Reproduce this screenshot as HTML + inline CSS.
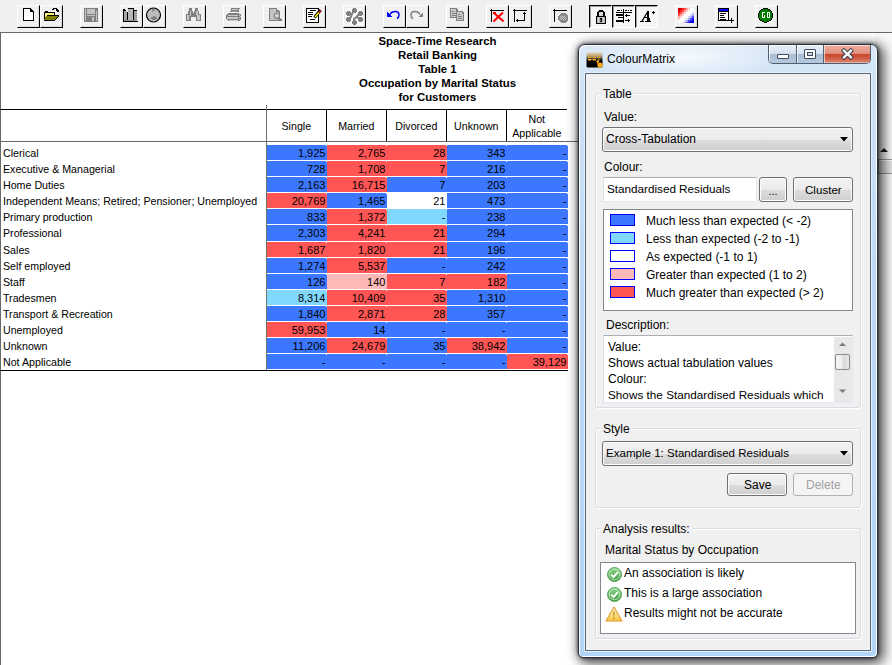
<!DOCTYPE html>
<html><head><meta charset="utf-8">
<style>
*{box-sizing:border-box;margin:0;padding:0}
html,body{width:892px;height:665px;overflow:hidden;background:#f0f0f0;font-family:"Liberation Sans",sans-serif;position:relative}
.a{position:absolute}
.tb{position:absolute;top:5px;width:23px;height:23px;border-top:1px solid #fff;border-left:1px solid #fff;border-right:1px solid #000;border-bottom:1px solid #000;box-shadow:inset -1px -1px 0 #dcdcdc;background:#f0f0f0}
.tb.p{border-top-color:#000;border-left-color:#000;border-right-color:#fff;border-bottom-color:#fff;box-shadow:inset 1px 1px 0 #a0a0a0;background:#f6f6f6}
.tb svg{position:absolute;left:2px;top:2px}
#content{left:0;top:32px;width:892px;height:633px;background:#fff;border-top:1px solid #696969;border-left:1px solid #696969}
.ttl{position:absolute;left:0;width:875px;text-align:center;font-weight:bold;font-size:11.4px;line-height:14px;color:#000;white-space:nowrap}
.lbl{position:absolute;left:3px;font-size:10.67px;line-height:15px;color:#000;white-space:nowrap}
.c{position:absolute;height:15px;font-size:11px;line-height:15px;padding-top:1px;text-align:right;padding-right:1.6px;color:#000;box-sizing:border-box}
.B{background:#3c78ff}.R{background:#ff5555}.L{background:#80d8ff}.W{background:#fff}.P{background:#ffb8b8}
.hd{position:absolute;font-size:10.67px;text-align:center;color:#000}
.dt{font-size:12px;color:#000;white-space:nowrap;position:absolute;line-height:17px}
.gb{position:absolute;border:1px solid #d5dfe5;border-radius:3px;box-shadow:inset 1px 1px 0 #fff,1px 1px 0 #fff}
.leg{position:absolute;background:#f0f0f0;padding:0 2px;font-size:12px;line-height:16px;white-space:nowrap}
.btn{position:absolute;border:1px solid #707070;border-radius:3px;background:linear-gradient(#f2f2f2 0,#ebebeb 50%,#dddddd 51%,#cfcfcf 100%);box-shadow:inset 0 0 0 1px #fcfcfc;font-size:12px;text-align:center;white-space:nowrap}
.c::after{content:"";position:absolute;right:0;top:0;width:1px;height:1px;background:#fff}

</style></head><body>
<div class="tb" style="left:17px"><svg width="23" height="23" viewBox="0 0 23 23" style="position:absolute;left:-1px;top:-1px" shape-rendering="crispEdges"><path d="M6.5 3.5 H13 L16.5 7 V15.5 H6.5 Z" fill="#fff" stroke="#000"/><rect x="13" y="4" width="1" height="3" fill="#000"/><rect x="13" y="6" width="3" height="1" fill="#000"/></svg></div>
<div class="tb" style="left:40px"><svg width="23" height="23" viewBox="0 0 23 23" style="position:absolute;left:-1px;top:-1px" shape-rendering="crispEdges"><path d="M4 7 H5 V6 H8 V7 H15 V10 H14 V8 H5 V15 H4 Z" fill="#000"/><path d="M5 8 H14 V10 H7 L5 13 Z" fill="#f8f870"/><path d="M7 10 H19 L15 15 H4 Z" fill="#808000"/><path d="M7 10 H19 V11 L15 16 H4 V15 H15 L18 11 H7 Z" fill="#000"/><path d="M12 5 V4 H13 V3 H16 V4 H17 V5 H18" stroke="#000" fill="none"/><path d="M16 5 H19 V7 H17 Z" fill="#000"/></svg></div>
<div class="tb" style="left:80px"><svg width="23" height="23" viewBox="0 0 23 23" style="position:absolute;left:-1px;top:-1px" shape-rendering="crispEdges"><rect x="4" y="3" width="14" height="14" fill="#808080"/><rect x="7" y="4" width="8" height="5" fill="#c4c4c4"/><rect x="5" y="4" width="1" height="12" fill="#c4c4c4"/><rect x="16" y="6" width="1" height="10" fill="#c4c4c4"/><rect x="7" y="10" width="8" height="1" fill="#c4c4c4"/><rect x="12" y="12" width="2" height="4" fill="#c4c4c4"/></svg></div>
<div class="tb" style="left:120px"><svg width="23" height="23" viewBox="0 0 23 23" style="position:absolute;left:-1px;top:-1px" shape-rendering="crispEdges"><path d="M3 4 H5 V5 H6 V7 H8 V3 H14 V5 H17 V16 H18 V17 H3 Z" fill="#000"/><rect x="4" y="6" width="3" height="9" fill="#a8a8a8"/><rect x="8" y="4" width="5" height="11" fill="#b8b8b8"/><rect x="14" y="6" width="3" height="9" fill="#a0a0a0"/><rect x="4" y="15" width="13" height="1" fill="#909090"/></svg></div>
<div class="tb" style="left:143px"><svg width="23" height="23" viewBox="0 0 23 23" style="position:absolute;left:-1px;top:-1px" shape-rendering="crispEdges"><circle cx="10.5" cy="10" r="7" fill="#bcbcbc" stroke="#000" stroke-width="1.2" shape-rendering="auto"/><path d="M8 12 H10 V11 H12 V12 H14 V14 H13 V15 H9 V14 H8 Z" fill="#808080"/><path d="M9 4 H12 V6 H10 V7 H9Z" fill="#909090"/></svg></div>
<div class="tb" style="left:183px"><svg width="23" height="23" viewBox="0 0 23 23" style="position:absolute;left:-1px;top:-1px" shape-rendering="crispEdges"><g fill="#808080"><rect x="6" y="3" width="3" height="3"/><rect x="5" y="6" width="5" height="3"/><rect x="3" y="9" width="5" height="7"/><rect x="8" y="8" width="5" height="4"/><rect x="12" y="3" width="3" height="3"/><rect x="11" y="6" width="5" height="3"/><rect x="13" y="9" width="5" height="7"/></g><g fill="#c8c8c8"><rect x="7" y="6" width="1" height="5"/><rect x="4" y="10" width="2" height="5"/><rect x="14" y="10" width="3" height="5"/><rect x="13" y="6" width="2" height="4"/></g></svg></div>
<div class="tb" style="left:223px"><svg width="23" height="23" viewBox="0 0 23 23" style="position:absolute;left:-1px;top:-1px" shape-rendering="crispEdges"><g fill="#808080"><path d="M8 3 H17 V4 H16 V7 H7 V6 H8Z"/><path d="M5 8 H16 V9 H18 V15 H17 V16 H5 V15 H4 V14 H3 V10 H4 V9 H5Z"/></g><g fill="#c8c8c8"><rect x="9" y="4" width="6" height="1"/><rect x="9" y="6" width="5" height="1" fill="#a0a0a0"/><rect x="5" y="10" width="10" height="1"/><rect x="4" y="12" width="11" height="2"/><rect x="6" y="15" width="9" height="1"/><rect x="16" y="10" width="1" height="1"/><rect x="16" y="12" width="1" height="1"/><rect x="17" y="11" width="1" height="1"/><rect x="16" y="14" width="1" height="1"/></g></svg></div>
<div class="tb" style="left:263px"><svg width="23" height="23" viewBox="0 0 23 23" style="position:absolute;left:-1px;top:-1px" shape-rendering="crispEdges"><path d="M6 3 H13 L17 7 V16 H6 Z" fill="#808080"/><path d="M7 4 H13 V7 H16 V15 H7 Z" fill="#c4c4c4"/><rect x="14" y="4" width="1" height="1" fill="#e8e8e8"/><g shape-rendering="auto"><circle cx="13.8" cy="10.8" r="2.6" fill="#d4d4d4" stroke="#808080" stroke-width="1.1"/><path d="M15.6 12.8 L18.5 15.2" stroke="#808080" stroke-width="1.6"/></g><rect x="15" y="14" width="4" height="2" fill="#808080"/></svg></div>
<div class="tb" style="left:303px"><svg width="23" height="23" viewBox="0 0 23 23" style="position:absolute;left:-1px;top:-1px" shape-rendering="crispEdges"><rect x="3.5" y="3.5" width="12" height="14" fill="#fff" stroke="#000"/><g fill="#000"><rect x="7" y="5" width="6" height="1"/><rect x="5" y="7" width="5" height="1"/><rect x="5" y="9" width="5" height="1"/><rect x="5" y="11" width="4" height="1"/><rect x="7" y="14" width="5" height="1"/></g><path d="M11.5 12.5 L17.5 5" stroke="#000" stroke-width="3" shape-rendering="auto"/><path d="M12 12 L16 7.5" stroke="#ff0" stroke-width="1.4" shape-rendering="auto"/><path d="M16.2 7.2 L17.6 5.6" stroke="#f00" stroke-width="1.6" shape-rendering="auto"/></svg></div>
<div class="tb" style="left:343px"><svg width="23" height="23" viewBox="0 0 23 23" style="position:absolute;left:-1px;top:-1px" shape-rendering="crispEdges"><rect x="3" y="3" width="17" height="17" fill="#fbfbfb"/><g fill="#808080"><rect x="10" y="3" width="3" height="5"/><rect x="9" y="4" width="5" height="3"/><rect x="4" y="6" width="3" height="5"/><rect x="3" y="7" width="5" height="3"/><rect x="16" y="6" width="3" height="5"/><rect x="15" y="7" width="5" height="3"/><rect x="4" y="12" width="3" height="5"/><rect x="3" y="13" width="5" height="3"/><rect x="16" y="12" width="3" height="5"/><rect x="15" y="13" width="5" height="3"/><rect x="10" y="15" width="3" height="5"/><rect x="9" y="16" width="5" height="3"/></g><path d="M5 8 L8.5 10 L11 5 M8.5 10 L8 12 L5 14 M17 8 L13.5 12 L17 14 M13.5 12 L11 14 L11 17" stroke="#808080" stroke-width="2" fill="none" shape-rendering="auto"/></svg></div>
<div class="tb" style="left:383px"><svg width="23" height="23" viewBox="0 0 23 23" style="position:absolute;left:-1px;top:-1px" shape-rendering="crispEdges"><path d="M4 7 L9 12 H4 Z" fill="#0000ff"/><path d="M7 9.5 C8 7, 10 6.5, 12.5 6.5 C15 6.5, 16 8, 16 10 C16 12, 15 13, 14 13.5" stroke="#0000ff" stroke-width="1.5" fill="none" shape-rendering="auto"/></svg></div>
<div class="tb" style="left:406px"><svg width="23" height="23" viewBox="0 0 23 23" style="position:absolute;left:-1px;top:-1px" shape-rendering="crispEdges"><path d="M17 7 L12 12 H17 Z" fill="#808080"/><path d="M14 9.5 C13 7, 11 6.5, 8.5 6.5 C6 6.5, 5 8, 5 10 C5 12, 6 13, 7 13.5" stroke="#808080" stroke-width="1.5" fill="none" shape-rendering="auto"/></svg></div>
<div class="tb" style="left:446px"><svg width="23" height="23" viewBox="0 0 23 23" style="position:absolute;left:-1px;top:-1px" shape-rendering="crispEdges"><path d="M4 3 H10 L12 5 V13 H4Z" fill="#808080"/><path d="M5 4 H10 V6 H11 V12 H5Z" fill="#c8c8c8"/><g fill="#808080"><rect x="6" y="6" width="2" height="1"/><rect x="6" y="8" width="4" height="1"/><rect x="6" y="10" width="4" height="1"/></g><path d="M10 6 H16 L18 8 V16 H10Z" fill="#808080"/><path d="M11 7 H16 V9 H17 V15 H11Z" fill="#c8c8c8"/><g fill="#808080"><rect x="12" y="9" width="2" height="1"/><rect x="12" y="11" width="4" height="1"/><rect x="12" y="13" width="4" height="1"/></g></svg></div>
<div class="tb" style="left:486px"><svg width="23" height="23" viewBox="0 0 23 23" style="position:absolute;left:-1px;top:-1px" shape-rendering="crispEdges"><rect x="5" y="4" width="1" height="13" fill="#000"/><rect x="4" y="5" width="14" height="1" fill="#000"/><path d="M7.5 7.5 L17.5 16.5 M17 7.5 L7.5 16.5" stroke="#f00" stroke-width="2" shape-rendering="auto"/><path d="M7 7 H10 V9 H7Z" fill="#f00"/></svg></div>
<div class="tb" style="left:509px"><svg width="23" height="23" viewBox="0 0 23 23" style="position:absolute;left:-1px;top:-1px" shape-rendering="crispEdges"><rect x="5" y="4" width="1" height="13" fill="#000"/><rect x="4" y="5" width="14" height="1" fill="#000"/><rect x="15" y="7" width="1" height="9" fill="#000"/><rect x="14" y="8" width="3" height="1" fill="#000"/><rect x="7" y="15" width="9" height="1" fill="#000"/><rect x="8" y="14" width="1" height="3" fill="#000"/></svg></div>
<div class="tb" style="left:549px"><svg width="23" height="23" viewBox="0 0 23 23" style="position:absolute;left:-1px;top:-1px" shape-rendering="crispEdges"><rect x="5" y="4" width="1" height="13" fill="#000"/><rect x="4" y="5" width="14" height="1" fill="#000"/><path d="M12 8 H16 L19 11 V15 L16 18 H12 L9 15 V11 Z" fill="#8a8a8a"/><g fill="#c8c8c8"><rect x="11" y="11" width="1" height="1"/><rect x="13" y="11" width="1" height="1"/><rect x="15" y="11" width="1" height="1"/><rect x="12" y="12" width="1" height="1"/><rect x="14" y="12" width="1" height="1"/><rect x="16" y="12" width="1" height="1"/><rect x="11" y="13" width="1" height="1"/><rect x="13" y="13" width="1" height="1"/><rect x="15" y="13" width="1" height="1"/><rect x="12" y="14" width="1" height="1"/><rect x="14" y="14" width="1" height="1"/><rect x="16" y="14" width="1" height="1"/></g></svg></div>
<div class="tb p" style="left:589px"><svg width="23" height="23" viewBox="0 0 23 23" style="position:absolute;left:-1px;top:-1px" shape-rendering="crispEdges"><path d="M10 5 H14 V6 H15 V7 H16 V11 H14 V7 H10 V11 H8 V7 H9 V6 H10 Z" fill="#000"/><rect x="10" y="7" width="4" height="4" fill="#d8d8d8"/><rect x="7" y="11" width="10" height="8" fill="#000"/><rect x="8" y="12" width="8" height="6" fill="#b8b8b8"/><rect x="9" y="12" width="1" height="6" fill="#d0d0d0"/><rect x="14" y="12" width="1" height="6" fill="#d0d0d0"/><path d="M11 13 H13 V17 H11 V16 H12 V15 H11Z" fill="#000"/></svg></div>
<div class="tb p" style="left:612px"><svg width="23" height="23" viewBox="0 0 23 23" style="position:absolute;left:-1px;top:-1px" shape-rendering="crispEdges"><g fill="#000"><rect x="5" y="5" width="3" height="1"/><rect x="9" y="5" width="1" height="1"/><rect x="13" y="5" width="2" height="1"/><rect x="16" y="5" width="1" height="1"/><rect x="18" y="5" width="2" height="1"/><rect x="4" y="7" width="16" height="1"/><rect x="4" y="9" width="7" height="2"/><rect x="6" y="12" width="5" height="1"/><rect x="4" y="15" width="7" height="2"/><rect x="11" y="4" width="1" height="14"/><rect x="13" y="10" width="5" height="1"/><rect x="14" y="9" width="1" height="3"/><rect x="13" y="15" width="5" height="1"/><rect x="16" y="14" width="1" height="3"/></g></svg></div>
<div class="tb p" style="left:635px"><svg width="23" height="23" viewBox="0 0 23 23" style="position:absolute;left:-1px;top:-1px" shape-rendering="crispEdges"><g fill="#000"><path d="M6 16.5 L12.5 6 L13.5 6.5 L7.5 16.5Z" shape-rendering="auto"/><path d="M12 6 H14 L14.8 16.5 H12.5Z"/><rect x="9" y="12" width="4" height="1"/><rect x="5" y="16" width="4" height="1"/><rect x="10" y="16" width="6" height="1"/><rect x="18" y="6" width="1" height="3"/><rect x="17" y="7" width="3" height="1"/></g></svg></div>
<div class="tb" style="left:675px"><svg width="23" height="23" viewBox="0 0 23 23" style="position:absolute;left:-1px;top:-1px" shape-rendering="crispEdges"><rect x="3" y="3" width="2" height="2" fill="#d00000"/><rect x="3" y="5" width="2" height="2" fill="#d00000"/><rect x="3" y="7" width="2" height="2" fill="#ff2020"/><rect x="3" y="9" width="2" height="2" fill="#ff5050"/><rect x="3" y="11" width="2" height="2" fill="#ffa0a0"/><rect x="3" y="13" width="2" height="2" fill="#ffd0d0"/><rect x="3" y="15" width="2" height="2" fill="#ffffff"/><rect x="3" y="17" width="2" height="1" fill="#ffffff"/><rect x="5" y="3" width="2" height="2" fill="#d00000"/><rect x="5" y="5" width="2" height="2" fill="#ff2020"/><rect x="5" y="7" width="2" height="2" fill="#ff5050"/><rect x="5" y="9" width="2" height="2" fill="#ffa0a0"/><rect x="5" y="11" width="2" height="2" fill="#ffd0d0"/><rect x="5" y="13" width="2" height="2" fill="#ffffff"/><rect x="5" y="15" width="2" height="2" fill="#ffffff"/><rect x="5" y="17" width="2" height="1" fill="#ffffff"/><rect x="7" y="3" width="2" height="2" fill="#ff2020"/><rect x="7" y="5" width="2" height="2" fill="#ff5050"/><rect x="7" y="7" width="2" height="2" fill="#ffa0a0"/><rect x="7" y="9" width="2" height="2" fill="#ffd0d0"/><rect x="7" y="11" width="2" height="2" fill="#ffffff"/><rect x="7" y="13" width="2" height="2" fill="#ffffff"/><rect x="7" y="15" width="2" height="2" fill="#ffffff"/><rect x="7" y="17" width="2" height="1" fill="#d8d8ff"/><rect x="9" y="3" width="2" height="2" fill="#ff5050"/><rect x="9" y="5" width="2" height="2" fill="#ffa0a0"/><rect x="9" y="7" width="2" height="2" fill="#ffd0d0"/><rect x="9" y="9" width="2" height="2" fill="#ffffff"/><rect x="9" y="11" width="2" height="2" fill="#ffffff"/><rect x="9" y="13" width="2" height="2" fill="#ffffff"/><rect x="9" y="15" width="2" height="2" fill="#d8d8ff"/><rect x="9" y="17" width="2" height="1" fill="#a8a8ff"/><rect x="11" y="3" width="2" height="2" fill="#ffa0a0"/><rect x="11" y="5" width="2" height="2" fill="#ffd0d0"/><rect x="11" y="7" width="2" height="2" fill="#ffffff"/><rect x="11" y="9" width="2" height="2" fill="#ffffff"/><rect x="11" y="11" width="2" height="2" fill="#ffffff"/><rect x="11" y="13" width="2" height="2" fill="#d8d8ff"/><rect x="11" y="15" width="2" height="2" fill="#a8a8ff"/><rect x="11" y="17" width="2" height="1" fill="#5050ff"/><rect x="13" y="3" width="2" height="2" fill="#ffd0d0"/><rect x="13" y="5" width="2" height="2" fill="#ffffff"/><rect x="13" y="7" width="2" height="2" fill="#ffffff"/><rect x="13" y="9" width="2" height="2" fill="#ffffff"/><rect x="13" y="11" width="2" height="2" fill="#d8d8ff"/><rect x="13" y="13" width="2" height="2" fill="#a8a8ff"/><rect x="13" y="15" width="2" height="2" fill="#5050ff"/><rect x="13" y="17" width="2" height="1" fill="#2020ff"/><rect x="15" y="3" width="2" height="2" fill="#ffffff"/><rect x="15" y="5" width="2" height="2" fill="#ffffff"/><rect x="15" y="7" width="2" height="2" fill="#ffffff"/><rect x="15" y="9" width="2" height="2" fill="#d8d8ff"/><rect x="15" y="11" width="2" height="2" fill="#a8a8ff"/><rect x="15" y="13" width="2" height="2" fill="#5050ff"/><rect x="15" y="15" width="2" height="2" fill="#2020ff"/><rect x="15" y="17" width="2" height="1" fill="#0000d0"/><rect x="17" y="3" width="2" height="2" fill="#ffffff"/><rect x="17" y="5" width="2" height="2" fill="#ffffff"/><rect x="17" y="7" width="2" height="2" fill="#d8d8ff"/><rect x="17" y="9" width="2" height="2" fill="#a8a8ff"/><rect x="17" y="11" width="2" height="2" fill="#5050ff"/><rect x="17" y="13" width="2" height="2" fill="#2020ff"/><rect x="17" y="15" width="2" height="2" fill="#0000d0"/><rect x="17" y="17" width="2" height="1" fill="#0000d0"/></svg></div>
<div class="tb" style="left:715px"><svg width="23" height="23" viewBox="0 0 23 23" style="position:absolute;left:-1px;top:-1px" shape-rendering="crispEdges"><rect x="3.5" y="3.5" width="10" height="12" fill="#fff" stroke="#000"/><rect x="4" y="4" width="9" height="2" fill="#0000ff"/><rect x="4" y="6" width="9" height="1" fill="#000"/><g fill="#000"><rect x="5" y="8" width="6" height="1"/><rect x="5" y="10" width="4" height="1"/><rect x="5" y="12" width="5" height="1"/><rect x="5" y="14" width="6" height="1"/><rect x="14" y="15" width="5" height="1"/><rect x="16" y="13" width="1" height="5"/></g></svg></div>
<div class="tb" style="left:755px"><svg width="23" height="23" viewBox="0 0 23 23" style="position:absolute;left:-1px;top:-1px" shape-rendering="crispEdges"><path d="M8 3 H13 V4 H15 V5 H16 V6 H17 V8 H18 V13 H17 V15 H16 V16 H14 V17 H12 V18 H9 V17 H7 V16 H5 V15 H4 V13 H3 V8 H4 V6 H5 V5 H6 V4 H8Z" fill="#000"/><path d="M8 4 H13 V5 H15 V6 H16 V8 H17 V13 H16 V15 H14 V16 H12 V17 H9 V16 H7 V15 H5 V13 H4 V8 H5 V6 H6 V5 H8Z" fill="#008000"/><g fill="#fff"><path d="M7 7 H10 V8 H8 V12 H9 V10 H10 V13 H7 Z"/><path d="M12 7 H15 V13 H12 Z M13 8 V12 H14 V8Z" fill-rule="evenodd"/></g></svg></div>
<div id="content" class="a"></div>
<div class="ttl" style="top:34.0px">Space-Time Research</div>
<div class="ttl" style="top:47.9px">Retail Banking</div>
<div class="ttl" style="top:61.8px">Table 1</div>
<div class="ttl" style="top:75.7px">Occupation by Marital Status</div>
<div class="ttl" style="top:89.6px">for Customers</div>
<div class="a" style="left:0;top:109px;width:567px;height:1px;background:#000"></div>
<div class="a" style="left:266px;top:105px;width:1px;height:265px;background:#707070"></div>
<div class="a" style="left:326px;top:110px;width:1px;height:31px;background:#000"></div>
<div class="a" style="left:386px;top:110px;width:1px;height:31px;background:#000"></div>
<div class="a" style="left:446px;top:110px;width:1px;height:31px;background:#000"></div>
<div class="a" style="left:506px;top:110px;width:1px;height:31px;background:#000"></div>
<div class="a" style="left:0;top:141px;width:875px;height:1px;background:#696969"></div>
<div class="a" style="left:0;top:370px;width:568px;height:1px;background:#000"></div>
<div class="hd" style="left:266.3px;width:60px;top:120px;line-height:13px">Single</div>
<div class="hd" style="left:326.3px;width:60px;top:120px;line-height:13px">Married</div>
<div class="hd" style="left:386.3px;width:60px;top:120px;line-height:13px">Divorced</div>
<div class="hd" style="left:446.3px;width:60px;top:120px;line-height:13px">Unknown</div>
<div class="hd" style="left:506.3px;width:61px;top:112px;line-height:14px">Not<br>Applicable</div>
<div class="lbl" style="top:146px">Clerical</div>
<div class="c B" style="left:267px;top:145px;width:60px;height:15px">1,925</div>
<div class="c R" style="left:327px;top:145px;width:60px;height:15px">2,765</div>
<div class="c R" style="left:387px;top:145px;width:60px;height:15px">28</div>
<div class="c B" style="left:447px;top:145px;width:60px;height:15px">343</div>
<div class="c B" style="left:507px;top:145px;width:61px;height:15px">-</div>
<div class="lbl" style="top:162px">Executive &amp; Managerial</div>
<div class="c B" style="left:267px;top:161px;width:60px;height:15px">728</div>
<div class="c R" style="left:327px;top:161px;width:60px;height:15px">1,708</div>
<div class="c R" style="left:387px;top:161px;width:60px;height:15px">7</div>
<div class="c B" style="left:447px;top:161px;width:60px;height:15px">216</div>
<div class="c B" style="left:507px;top:161px;width:61px;height:15px">-</div>
<div class="lbl" style="top:178px">Home Duties</div>
<div class="c B" style="left:267px;top:177px;width:60px;height:15px">2,163</div>
<div class="c R" style="left:327px;top:177px;width:60px;height:15px">16,715</div>
<div class="c B" style="left:387px;top:177px;width:60px;height:15px">7</div>
<div class="c B" style="left:447px;top:177px;width:60px;height:15px">203</div>
<div class="c B" style="left:507px;top:177px;width:61px;height:15px">-</div>
<div class="lbl" style="top:194px">Independent Means; Retired; Pensioner; Unemployed</div>
<div class="c R" style="left:267px;top:193px;width:60px;height:15px">20,769</div>
<div class="c B" style="left:327px;top:193px;width:60px;height:15px">1,465</div>
<div class="c W" style="left:387px;top:193px;width:60px;height:15px">21</div>
<div class="c B" style="left:447px;top:193px;width:60px;height:15px">473</div>
<div class="c B" style="left:507px;top:193px;width:61px;height:15px">-</div>
<div class="lbl" style="top:210px">Primary production</div>
<div class="c B" style="left:267px;top:209px;width:60px;height:15px">833</div>
<div class="c R" style="left:327px;top:209px;width:60px;height:15px">1,372</div>
<div class="c L" style="left:387px;top:209px;width:60px;height:15px">-</div>
<div class="c B" style="left:447px;top:209px;width:60px;height:15px">238</div>
<div class="c B" style="left:507px;top:209px;width:61px;height:15px">-</div>
<div class="lbl" style="top:226px">Professional</div>
<div class="c B" style="left:267px;top:225px;width:60px;height:16px">2,303</div>
<div class="c R" style="left:327px;top:225px;width:60px;height:16px">4,241</div>
<div class="c R" style="left:387px;top:225px;width:60px;height:16px">21</div>
<div class="c B" style="left:447px;top:225px;width:60px;height:16px">294</div>
<div class="c B" style="left:507px;top:225px;width:61px;height:16px">-</div>
<div class="lbl" style="top:243px">Sales</div>
<div class="c R" style="left:267px;top:242px;width:60px;height:15px">1,687</div>
<div class="c R" style="left:327px;top:242px;width:60px;height:15px">1,820</div>
<div class="c R" style="left:387px;top:242px;width:60px;height:15px">21</div>
<div class="c B" style="left:447px;top:242px;width:60px;height:15px">196</div>
<div class="c B" style="left:507px;top:242px;width:61px;height:15px">-</div>
<div class="lbl" style="top:259px">Self employed</div>
<div class="c B" style="left:267px;top:258px;width:60px;height:15px">1,274</div>
<div class="c R" style="left:327px;top:258px;width:60px;height:15px">5,537</div>
<div class="c B" style="left:387px;top:258px;width:60px;height:15px">-</div>
<div class="c B" style="left:447px;top:258px;width:60px;height:15px">242</div>
<div class="c B" style="left:507px;top:258px;width:61px;height:15px">-</div>
<div class="lbl" style="top:275px">Staff</div>
<div class="c B" style="left:267px;top:274px;width:60px;height:15px">126</div>
<div class="c P" style="left:327px;top:274px;width:60px;height:15px">140</div>
<div class="c R" style="left:387px;top:274px;width:60px;height:15px">7</div>
<div class="c R" style="left:447px;top:274px;width:60px;height:15px">182</div>
<div class="c B" style="left:507px;top:274px;width:61px;height:15px">-</div>
<div class="lbl" style="top:291px">Tradesmen</div>
<div class="c L" style="left:267px;top:290px;width:60px;height:15px">8,314</div>
<div class="c R" style="left:327px;top:290px;width:60px;height:15px">10,409</div>
<div class="c R" style="left:387px;top:290px;width:60px;height:15px">35</div>
<div class="c B" style="left:447px;top:290px;width:60px;height:15px">1,310</div>
<div class="c B" style="left:507px;top:290px;width:61px;height:15px">-</div>
<div class="lbl" style="top:307px">Transport &amp; Recreation</div>
<div class="c B" style="left:267px;top:306px;width:60px;height:15px">1,840</div>
<div class="c R" style="left:327px;top:306px;width:60px;height:15px">2,871</div>
<div class="c R" style="left:387px;top:306px;width:60px;height:15px">28</div>
<div class="c B" style="left:447px;top:306px;width:60px;height:15px">357</div>
<div class="c B" style="left:507px;top:306px;width:61px;height:15px">-</div>
<div class="lbl" style="top:323px">Unemployed</div>
<div class="c R" style="left:267px;top:322px;width:60px;height:15px">59,953</div>
<div class="c B" style="left:327px;top:322px;width:60px;height:15px">14</div>
<div class="c B" style="left:387px;top:322px;width:60px;height:15px">-</div>
<div class="c B" style="left:447px;top:322px;width:60px;height:15px">-</div>
<div class="c B" style="left:507px;top:322px;width:61px;height:15px">-</div>
<div class="lbl" style="top:339px">Unknown</div>
<div class="c B" style="left:267px;top:338px;width:60px;height:15px">11,206</div>
<div class="c R" style="left:327px;top:338px;width:60px;height:15px">24,679</div>
<div class="c B" style="left:387px;top:338px;width:60px;height:15px">35</div>
<div class="c R" style="left:447px;top:338px;width:60px;height:15px">38,942</div>
<div class="c B" style="left:507px;top:338px;width:61px;height:15px">-</div>
<div class="lbl" style="top:355px">Not Applicable</div>
<div class="c B" style="left:267px;top:354px;width:60px;height:15px">-</div>
<div class="c B" style="left:327px;top:354px;width:60px;height:15px">-</div>
<div class="c B" style="left:387px;top:354px;width:60px;height:15px">-</div>
<div class="c B" style="left:447px;top:354px;width:60px;height:15px">-</div>
<div class="c R" style="left:507px;top:354px;width:61px;height:15px">39,129</div>
<!-- scrollbar behind dialog -->
<div class="a" style="left:875px;top:33px;width:17px;height:632px;background:#f8f8f8"></div>
<svg class="a" style="left:880px;top:147px" width="9" height="6"><path d="M0 5 H8 L4 1 Z" fill="#202020"/></svg>
<div class="a" style="left:878px;top:159px;width:14px;height:15px;border:1px solid #9a9a9a;border-right:none;background:#e4e4e4;box-shadow:inset 1px 1px 0 #fff"></div>
<!-- window shadow -->
<div class="a" style="left:578px;top:44px;width:300px;height:614px;border-radius:7px;box-shadow:0 0 3px 1px rgba(0,0,0,0.45),3px 3px 12px 3px rgba(0,0,0,0.66)"></div>
<!-- frame -->
<div class="a" style="left:578px;top:44px;width:300px;height:614px;border:1px solid #26323f;border-radius:7px 7px 5px 5px;background:linear-gradient(180deg,#dce9f7 0%,#d0e3f6 6%,#bcd8f7 40%,#b2d4f8 100%);box-shadow:inset 1px 1px 0 #fff,inset -1px -1px 0 #fff"></div>
<div class="a" style="left:580px;top:46px;width:190px;height:26px;background:radial-gradient(ellipse 90px 22px at 105px 12px,rgba(255,255,255,0.75),rgba(255,255,255,0) 100%)"></div>
<!-- client -->
<div class="a" style="left:584px;top:72px;width:288px;height:580px;border:1px solid #e6f0fb;"></div>
<div class="a" style="left:585px;top:73px;width:286px;height:578px;border:1px solid #5c6a7a;background:#f0f0f0"></div>
<!-- title icon -->
<svg class="a" style="left:586px;top:51px" width="17" height="17" viewBox="0 0 17 17">
<defs><linearGradient id="ig" x1="0" y1="0" x2="0" y2="1"><stop offset="0" stop-color="#f0ece4"/><stop offset="0.25" stop-color="#b0a898"/><stop offset="0.5" stop-color="#302a20"/><stop offset="0.55" stop-color="#000"/><stop offset="1" stop-color="#000"/></linearGradient></defs>
<rect x="0.5" y="0.5" width="16" height="16" rx="1.5" fill="url(#ig)"/>
<g fill="#ffb020"><rect x="2" y="3" width="3.5" height="1.5" opacity="0.5"/><rect x="6.5" y="3" width="3.5" height="1.5" opacity="0.5"/><rect x="11" y="3" width="3.5" height="1.5" opacity="0.5"/><rect x="2" y="5.5" width="3.5" height="1.5" opacity="0.8"/><rect x="6.5" y="5.5" width="3.5" height="1.5" opacity="0.8"/><rect x="11" y="5.5" width="3.5" height="1.5" opacity="0.8"/><rect x="2" y="8" width="3.5" height="1.5"/><rect x="6.5" y="8" width="3.5" height="1.5"/></g>
<path d="M10.5 11 L12.5 9.5 L11.5 12.5" stroke="#ffb020" stroke-width="1.3" fill="none"/><circle cx="14" cy="14" r="2.6" fill="#ffaa18"/>
</svg>
<div class="dt" style="left:607px;top:51px;font-size:12px">ColourMatrix</div>
<!-- caption buttons -->
<div class="a" style="left:768px;top:45px;width:103px;height:19px;border:1px solid #4f5f72;border-top:none;border-radius:0 0 5px 5px;overflow:hidden">
  <div class="a" style="left:0;top:0;width:28px;height:18px;background:linear-gradient(#e8eff8 0,#d6e1ee 47%,#a9bdd3 50%,#b6c8dc 100%);border-right:1px solid #4f5f72;box-shadow:inset 1px 1px 0 rgba(255,255,255,0.8)"></div>
  <div class="a" style="left:28px;top:0;width:27px;height:18px;background:linear-gradient(#e8eff8 0,#d6e1ee 47%,#a9bdd3 50%,#b6c8dc 100%);border-right:1px solid #4f5f72;box-shadow:inset 1px 1px 0 rgba(255,255,255,0.8)"></div>
  <div class="a" style="left:55px;top:0;width:47px;height:18px;background:linear-gradient(#eeaea0 0,#e1907e 47%,#c9462c 50%,#cf5a40 72%,#dd8a72 100%);box-shadow:inset 1px 1px 0 rgba(255,255,255,0.6),inset -1px -1px 0 rgba(255,255,255,0.35)"></div>
</div>
<div class="a" style="left:777px;top:54px;width:12px;height:5px;background:#fff;border:1px solid #3c4a5c;border-radius:1px"></div>
<div class="a" style="left:804px;top:49px;width:12px;height:10px;background:#fff;border:1px solid #3c4a5c;border-radius:1px"><div class="a" style="left:2px;top:2px;width:6px;height:4px;border:1px solid #3c4a5c;background:#c8d6e6"></div></div>
<svg class="a" style="left:841px;top:48px" width="13" height="12" viewBox="0 0 13 12"><path d="M3 2.8 L9.8 9.2 M9.8 2.8 L3 9.2" stroke="#353c4c" stroke-width="4.4" stroke-linecap="square"/><path d="M3 2.8 L9.8 9.2 M9.8 2.8 L3 9.2" stroke="#fff" stroke-width="2.4" stroke-linecap="square"/></svg>

<!-- Table group -->
<div class="gb" style="left:595px;top:93px;width:266px;height:315px"></div>
<div class="leg" style="left:601px;top:86px">Table</div>
<div class="dt" style="left:604px;top:109px">Value:</div>
<div class="btn" style="left:602px;top:127px;width:251px;height:25px"></div>
<div class="dt" style="left:606px;top:131px">Cross-Tabulation</div>
<svg class="a" style="left:840px;top:137px" width="9" height="5"><path d="M0 0 H8 L4 4.5 Z" fill="#000"/></svg>
<div class="dt" style="left:604px;top:159px">Colour:</div>
<div class="a" style="left:603px;top:177px;width:154px;height:25px;background:#fff;border:1px solid #e3e9ef;border-left-color:#dbdfe6;border-top-color:#abadb3"></div>
<div class="dt" style="left:607px;top:180px;font-size:11.7px">Standardised Residuals</div>
<div class="btn" style="left:759px;top:177px;width:28px;height:25px"></div>
<div class="dt" style="left:768.5px;top:183px;font-size:11px">...</div>
<div class="btn" style="left:793px;top:177px;width:60px;height:25px"></div>
<div class="dt" style="left:805px;top:181px;font-size:11.6px">Cluster</div>
<div class="a" style="left:603px;top:209px;width:250px;height:102px;background:#fff;border:1px solid #828790"></div>
<div class="a" style="left:610px;top:214px;width:25px;height:12px;border:1px solid #0000ff;background:#3c78ff"></div>
<div class="a" style="left:610px;top:232px;width:25px;height:12px;border:1px solid #0000ff;background:#80d8ff"></div>
<div class="a" style="left:610px;top:250px;width:25px;height:12px;border:1px solid #0000ff;background:#fff"></div>
<div class="a" style="left:610px;top:268px;width:25px;height:12px;border:1px solid #0000ff;background:#ffb8b8"></div>
<div class="a" style="left:610px;top:286px;width:25px;height:12px;border:1px solid #0000ff;background:#ff5555"></div>
<div class="dt" style="left:646px;top:213px">Much less than expected (&lt; -2)</div>
<div class="dt" style="left:646px;top:231px">Less than expected (-2 to -1)</div>
<div class="dt" style="left:646px;top:249px">As expected (-1 to 1)</div>
<div class="dt" style="left:646px;top:267px">Greater than expected (1 to 2)</div>
<div class="dt" style="left:646px;top:285px">Much greater than expected (&gt; 2)</div>
<div class="dt" style="left:606px;top:317px">Description:</div>
<div class="a" style="left:603px;top:335px;width:250px;height:68px;background:#fff;border:1px solid #e3e9ef;border-left-color:#dbdfe6;border-top-color:#abadb3"></div>
<div class="dt" style="left:608px;top:339px">Value:</div>
<div class="dt" style="left:608px;top:355px">Shows actual tabulation values</div>
<div class="dt" style="left:608px;top:371px">Colour:</div>
<div class="dt" style="left:608px;top:386px;font-size:11.75px">Shows the Standardised Residuals which</div>
<div class="a" style="left:834px;top:337px;width:18px;height:65px;background:#e8e8e8"></div>
<svg class="a" style="left:839px;top:342px" width="8" height="5"><path d="M0 4 H7 L3.5 0.5 Z" fill="#7a7a7a"/></svg>
<div class="a" style="left:835px;top:354px;width:15px;height:16px;border:1px solid #8a8a8a;border-radius:2px;background:linear-gradient(90deg,#f4f4f4 0,#f0f0f0 40%,#d8d8d8 60%,#e8e8e8 100%)"></div>
<svg class="a" style="left:839px;top:389px" width="8" height="5"><path d="M0 0.5 H7 L3.5 4 Z" fill="#7a7a7a"/></svg>

<!-- Style group -->
<div class="gb" style="left:595px;top:428px;width:266px;height:80px"></div>
<div class="leg" style="left:601px;top:421px">Style</div>
<div class="btn" style="left:602px;top:441px;width:251px;height:25px"></div>
<div class="dt" style="left:606px;top:445px;font-size:11.55px">Example 1: Standardised Residuals</div>
<svg class="a" style="left:840px;top:451px" width="9" height="5"><path d="M0 0 H8 L4 4.5 Z" fill="#000"/></svg>
<div class="btn" style="left:727px;top:473px;width:60px;height:23px"></div>
<div class="dt" style="left:744px;top:477px">Save</div>
<div class="a" style="left:793px;top:473px;width:60px;height:23px;border:1px solid #adb2b5;border-radius:3px;background:#f4f4f4"></div>
<div class="dt" style="left:806px;top:477px;color:#a0a0a0">Delete</div>

<!-- Analysis group -->
<div class="gb" style="left:595px;top:528px;width:266px;height:111px"></div>
<div class="leg" style="left:601px;top:521px">Analysis results:</div>
<div class="dt" style="left:605px;top:542px">Marital Status by Occupation</div>
<div class="a" style="left:600px;top:562px;width:256px;height:72px;background:#fff;border:1px solid #828790"></div>
<svg class="a" style="left:607px;top:567px" width="15" height="15" viewBox="0 0 15 15"><defs><linearGradient id="gc" x1="0" y1="0" x2="0" y2="1"><stop offset="0" stop-color="#8fd88f"/><stop offset="1" stop-color="#3a9a3a"/></linearGradient></defs><circle cx="7.5" cy="7.5" r="7" fill="url(#gc)" stroke="#4a9a4a" stroke-width="0.8"/><circle cx="7.5" cy="7.5" r="5.3" fill="none" stroke="#d8f4d8" stroke-width="0.8"/><path d="M4.2 7.6 L6.6 10 L10.8 5.2" stroke="#fff" stroke-width="1.9" fill="none"/></svg>
<svg class="a" style="left:607px;top:587px" width="15" height="15" viewBox="0 0 15 15"><defs><linearGradient id="gc2" x1="0" y1="0" x2="0" y2="1"><stop offset="0" stop-color="#8fd88f"/><stop offset="1" stop-color="#3a9a3a"/></linearGradient></defs><circle cx="7.5" cy="7.5" r="7" fill="url(#gc2)" stroke="#4a9a4a" stroke-width="0.8"/><circle cx="7.5" cy="7.5" r="5.3" fill="none" stroke="#d8f4d8" stroke-width="0.8"/><path d="M4.2 7.6 L6.6 10 L10.8 5.2" stroke="#fff" stroke-width="1.9" fill="none"/></svg>
<svg class="a" style="left:605px;top:606px" width="18" height="16" viewBox="0 0 18 16"><defs><linearGradient id="gw" x1="0" y1="0" x2="0" y2="1"><stop offset="0" stop-color="#fffbe0"/><stop offset="1" stop-color="#f4c640"/></linearGradient></defs><path d="M9 1 L17 15 H1 Z" fill="url(#gw)" stroke="#e39a30" stroke-width="1.1" stroke-linejoin="round"/><path d="M8.2 5.5 H9.8 L9.4 10.5 H8.6 Z" fill="#c88a10"/><rect x="8.2" y="11.5" width="1.6" height="1.6" fill="#c88a10"/></svg>
<div class="dt" style="left:624px;top:565px">An association is likely</div>
<div class="dt" style="left:624px;top:585px">This is a large association</div>
<div class="dt" style="left:624px;top:605px">Results might not be accurate</div>
</body></html>
